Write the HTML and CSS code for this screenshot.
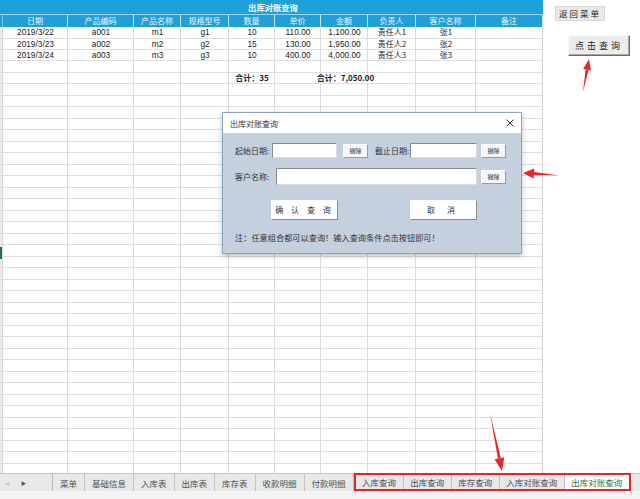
FILE: index.html
```html
<!DOCTYPE html>
<html lang="zh-CN">
<head>
<meta charset="utf-8">
<title>出库对账查询</title>
<link rel="stylesheet" href="styles.css">
</head>
<body>
<div class="app">
  <div class="main">
    <div class="sheet">
      <div class="title-row">出库对账查询</div>
      <div class="cols hdr">
        <span class="strip"></span><span>日期</span><span>产品编码</span><span>产品名称</span><span>规格型号</span><span>数量</span><span>单价</span><span>金额</span><span>负责人</span><span>客户名称</span><span>备注</span>
      </div>
      <div class="body">
        <div class="cols row"><span></span><span>2019/3/22</span><span>a001</span><span>m1</span><span>g1</span><span>10</span><span>110.00</span><span>1,100.00</span><span class="cjk">责任人1</span><span class="cjk">张1</span><span></span></div>
        <div class="cols row"><span></span><span>2019/3/23</span><span>a002</span><span>m2</span><span>g2</span><span>15</span><span>130.00</span><span>1,950.00</span><span class="cjk">责任人2</span><span class="cjk">张2</span><span></span></div>
        <div class="cols row"><span></span><span>2019/3/24</span><span>a003</span><span>m3</span><span>g3</span><span>10</span><span>400.00</span><span>4,000.00</span><span class="cjk">责任人3</span><span class="cjk">张3</span><span></span></div>
        <div class="cols row"></div>
        <div class="cols row sum"><span class="sum-qty">合计：35</span><span class="sum-amt">合计：7,050.00</span></div>
        <span class="active-cell"></span>
      </div>
    </div>
    <div class="side">
      <button class="btn-back">返回菜单</button>
      <button class="btn-query">点击查询</button>
    </div>
  </div>
  <div class="tabbar">
    <div class="nav"><span class="nav-l">&#9664;</span><span class="nav-r">&#9654;</span></div>
    <span class="tab">菜单</span>
    <span class="tab">基础信息</span>
    <span class="tab">入库表</span>
    <span class="tab">出库表</span>
    <span class="tab">库存表</span>
    <span class="tab">收款明细</span>
    <span class="tab">付款明细</span>
    <div class="tab-group">
      <span class="tab">入库查询</span>
      <span class="tab">出库查询</span>
      <span class="tab">库存查询</span>
      <span class="tab">入库对账查询</span>
      <span class="tab active">出库对账查询</span>
    </div>
  </div>
  <div class="status"></div>

  <div class="dialog">
    <div class="dlg-title">
      <span>出库对账查询</span>
      <svg class="close" width="8" height="8" viewBox="0 0 8 8"><path d="M0.5 0.5L7.5 7.5M7.5 0.5L0.5 7.5" stroke="#333" stroke-width="1"/></svg>
    </div>
    <div class="dlg-body">
      <div class="frow r1">
        <span class="lbl l1">起始日期:</span><span class="inp w65"></span><button class="sbtn s1">撤除</button>
        <span class="lbl l2">截止日期:</span><span class="inp w67"></span><button class="sbtn s2">撤除</button>
      </div>
      <div class="frow r2">
        <span class="lbl l3">客户名称:</span><span class="inp w201"></span><button class="sbtn s2">撤除</button>
      </div>
      <div class="frow r3">
        <button class="bbtn b1">确 认 查 询</button><button class="bbtn b2">取 消</button>
      </div>
      <p class="note">注：任意组合都可以查询！输入查询条件点击按钮即可！</p>
    </div>
  </div>

  <svg class="arrows" width="640" height="499" viewBox="0 0 640 499">
    <g fill="#e8252b">
      <polygon points="583,92 588.5,70.1 585.6,69.6"/>
      <polygon points="589,59 591,70.5 583.1,69.1"/>
      <polygon points="559,175.5 534.1,172.1 533.9,175.1"/>
      <polygon points="523,173 534.3,168.6 533.7,178.6"/>
      <polygon points="490,413 497.9,458.6 500.8,458"/>
      <polygon points="502,471 494.5,459.3 504.3,457.3"/>
    </g>
  </svg>
</div>
</body>
</html>
```
FILE: styles.css
```css
* { box-sizing: border-box; }
body {
  margin: 0;
  background: #fff;
  font-family: "Liberation Sans", "Noto Sans CJK SC", sans-serif;
  color: #222;
}
.app {
  position: relative;
  width: 640px;
  height: 499px;
  overflow: hidden;
}
.main {
  display: flex;
  height: 473px;
}
.sheet {
  width: 543px;
  display: flex;
  flex-direction: column;
}
.title-row {
  height: 15px;
  background: #1fa0d8;
  border-bottom: 1px solid #9fd6ef;
  color: #fff;
  font-family: "Noto Sans CJK SC", sans-serif;
  font-weight: bold;
  font-size: 8.3px;
  line-height: 14px;
  text-align: center;
  padding-left: 3px;
}
.cols {
  display: grid;
  grid-template-columns: 3px 65px 66px 47px 48px 46px 46px 47px 48px 60px 67px;
}
.hdr {
  height: 12px;
  background: #1fa0d8;
  color: #eaf6fc;
  font-family: "Noto Sans CJK SC", sans-serif;
  font-size: 8px;
  line-height: 12px;
}
.hdr span {
  text-align: center;
  border-right: 1px solid #bfe4f5;
}
.hdr span.strip { border-right: 1px solid #7cc4e6; }
.body {
  flex: 1;
  position: relative;
  background-color: #fff;
  background-image:
    linear-gradient(#d6d6d6, #d6d6d6),
    linear-gradient(#dcdcdc, #dcdcdc),
    linear-gradient(#dcdcdc, #dcdcdc),
    linear-gradient(#dcdcdc, #dcdcdc),
    linear-gradient(#dcdcdc, #dcdcdc),
    linear-gradient(#dcdcdc, #dcdcdc),
    linear-gradient(#dcdcdc, #dcdcdc),
    linear-gradient(#dcdcdc, #dcdcdc),
    linear-gradient(#dcdcdc, #dcdcdc),
    linear-gradient(#dcdcdc, #dcdcdc),
    linear-gradient(#d0d0d0, #d0d0d0),
    repeating-linear-gradient(to bottom, transparent 0, transparent 10.5px, #dedede 10.5px, #dedede 11.5px),
    linear-gradient(#ececec, #ececec);
  background-size:
    1px 100%, 1px 100%, 1px 100%, 1px 100%, 1px 100%, 1px 100%,
    1px 100%, 1px 100%, 1px 100%, 1px 100%, 1px 100%, auto, 2px 100%;
  background-position:
    2px 0, 67px 0, 133px 0, 180px 0, 228px 0, 274px 0,
    320px 0, 367px 0, 415px 0, 475px 0, 542px 0, 0 0, 0 0;
  background-repeat:
    no-repeat, no-repeat, no-repeat, no-repeat, no-repeat, no-repeat,
    no-repeat, no-repeat, no-repeat, no-repeat, no-repeat, repeat, no-repeat;
}
.row {
  height: 11.5px;
  line-height: 11px;
  font-size: 8.3px;
  color: #222;
}
.row span {
  text-align: center;
  white-space: nowrap;
}
.row .cjk {
  font-family: "Noto Sans CJK SC", sans-serif;
  font-size: 8px;
  line-height: 10px;
}
.sum {
  font-family: "Noto Sans CJK SC", sans-serif;
  font-weight: bold;
  font-size: 8px;
  line-height: 10px;
}
.sum .sum-qty { grid-column: 6; }
.sum .sum-amt { grid-column: 7 / span 3; }
.active-cell {
  position: absolute;
  left: 0;
  top: 220px;
  width: 2px;
  height: 12px;
  background: #217346;
}

.side {
  flex: 1;
  display: flex;
  flex-direction: column;
  align-items: flex-start;
  padding: 6px 0 0 12px;
}
.side button {
  font-family: "Noto Sans CJK SC", sans-serif;
  padding: 0;
  color: #222;
  cursor: default;
}
.btn-back {
  width: 50px;
  height: 15px;
  font-size: 8.5px;
  line-height: 13px;
  letter-spacing: 2px;
  background: #e9e9e9;
  border: 1px solid #d8d8d8;
}
.btn-query {
  margin: 14px 0 0 13px;
  width: 62px;
  height: 21px;
  font-size: 9px;
  line-height: 19px;
  letter-spacing: 3px;
  background: #ececec;
  border: 1px solid;
  border-color: #fafafa #6b6b6b #6b6b6b #fafafa;
  box-shadow: inset -1px -1px 0 #a8a8a8;
}

.tabbar {
  height: 18px;
  display: flex;
  align-items: stretch;
  background: #e8e8e8;
  border-top: 1px solid #c4c4c4;
  font-family: "Noto Sans CJK SC", sans-serif;
  font-size: 8.5px;
  color: #505050;
}
.nav {
  width: 53px;
  display: flex;
  align-items: center;
  gap: 11px;
  padding-left: 5px;
  font-size: 5px;
  border-right: 1px solid #b8b8b8;
}
.nav-l { color: #c8c8c8; }
.nav-r { color: #555; }
.tab {
  display: flex;
  align-items: center;
  padding: 0 7px;
  border-right: 1px solid #c2c2c2;
  white-space: nowrap;
}
.tab-group {
  display: flex;
  margin-top: -1px;
  border: 2px solid #e3262b;
}
.tab-group .tab { padding: 0 6.5px; }
.tab-group .tab:last-child { border-right: none; }
.tab.active {
  background: #fff;
  color: #1e7a45;
}
.status {
  height: 8px;
  background: #f3f3f3;
}

.dialog {
  position: absolute;
  left: 222px;
  top: 112px;
  width: 300px;
  height: 142px;
  border: 1px solid #8ba3c1;
  background: #c4d0de;
  box-shadow: 0 2px 5px rgba(0, 0, 0, 0.25);
  font-family: "Noto Sans CJK SC", sans-serif;
  color: #333;
}
.dlg-title {
  height: 20px;
  background: #fff;
  display: flex;
  align-items: center;
  justify-content: space-between;
  padding: 0 7px 0 7px;
  font-size: 8px;
}
.dlg-body {
  padding: 10px 0 0 12px;
}
.frow {
  display: flex;
  align-items: center;
}
.r1 { height: 15px; }
.r2 { height: 17px; margin-top: 10px; }
.r3 { height: 20px; margin-top: 15px; }
.lbl {
  font-size: 8px;
  line-height: 12px;
  white-space: nowrap;
}
.l1 { width: 37px; }
.l2 { width: 35px; margin-left: 7px; }
.l3 { width: 41px; }
.inp {
  height: 100%;
  background: #fff;
  border: 1px solid;
  border-color: #8a8a8a #dcdcdc #dcdcdc #8a8a8a;
}
.w65 { width: 65px; }
.w67 { width: 67px; }
.w201 { width: 201px; }
.sbtn {
  width: 25px;
  height: 14px;
  padding: 0;
  font-family: "Noto Sans CJK SC", sans-serif;
  font-size: 6px;
  line-height: 12px;
  color: #333;
  background: #f6f6f6;
  border: 1px solid;
  border-color: #fff #9a9a9a #9a9a9a #fff;
}
.s1 { margin-left: 6px; }
.s2 { margin-left: 4px; }
.bbtn {
  width: 67px;
  height: 20px;
  padding: 0;
  font-family: "Noto Sans CJK SC", sans-serif;
  font-size: 8px;
  line-height: 18px;
  color: #333;
  background: #fff;
  border: 1px solid;
  border-color: #fff #8c8c8c #8c8c8c #fff;
}
.b1 { margin-left: 36px; letter-spacing: 3px; }
.b2 { margin-left: 72px; letter-spacing: 5px; }
.note {
  margin: 12px 0 0 0;
  font-size: 8.2px;
  line-height: 11px;
  color: #333;
  white-space: nowrap;
}

.arrows {
  position: absolute;
  left: 0;
  top: 0;
  pointer-events: none;
}
```
